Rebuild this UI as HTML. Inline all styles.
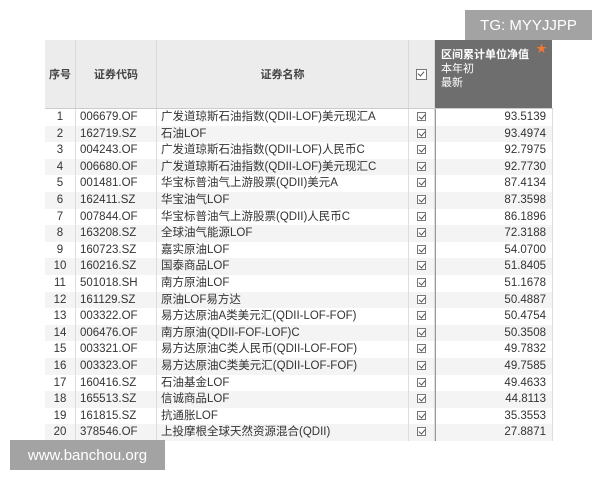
<!DOCTYPE html>
<html><head><meta charset="utf-8"><style>
body{margin:0;width:600px;height:480px;background:#fff;position:relative;overflow:hidden;font-family:"Liberation Sans","Noto Sans CJK SC",sans-serif;color:#333}
.hd{position:absolute;top:40px;height:68px;background:#ececec;font-size:11px;font-weight:bold;color:#444;display:flex;align-items:center;justify-content:center;box-sizing:border-box;border-right:1px solid #d8d8d8}
.row{position:absolute;left:45px;width:508px;height:16.6px;font-size:11.5px;line-height:16.6px}
.row div{position:absolute;top:0;height:100%;box-sizing:border-box;border-right:1px solid #ddd;white-space:nowrap;overflow:hidden}
.c1{left:0;width:31px;text-align:center}
.c2{left:31px;width:81px;padding-left:4px}
.c3{left:112px;width:252px;padding-left:4px}
.c4{left:364px;width:26px}
.c5{left:390px;width:118px;text-align:right;padding-right:6px;border-left:1px solid #999}
.cb{position:absolute;left:8px;top:3px;width:9px;height:9px;border:1px solid #777;box-sizing:border-box;background:#fff}
.cb:after{content:"";position:absolute;left:2px;top:0px;width:3px;height:5px;border:solid #555;border-width:0 1px 1px 0;transform:rotate(40deg)}
.wm{position:absolute;background:#a3a3a3;color:#fff;font-size:15px;display:flex;align-items:center;justify-content:center}
</style></head><body>
<div class="hd" style="left:45px;width:31px">序号</div>
<div class="hd" style="left:76px;width:81px">证券代码</div>
<div class="hd" style="left:157px;width:252px">证券名称</div>
<div class="hd" style="left:409px;width:26px"><span class="cb" style="position:relative;left:0;top:0;display:inline-block;width:11px;height:11px"></span></div>
<div style="position:absolute;left:435px;top:40px;width:117px;height:68px;background:#6e6e6e;color:#fff;font-size:11px;line-height:14px;padding:8px 0 0 6px;box-sizing:border-box"><b>区间累计单位净值</b><br>本年初<br>最新<span style="position:absolute;right:5px;top:2px;color:#f07830;font-size:11px">★</span></div>
<div style="position:absolute;left:45px;top:108px;width:508px;height:1px;background:#ccc"></div>
<div id="rows"></div>
<div class="wm" style="left:465px;top:10px;width:127px;height:30px">TG: MYYJJPP</div>
<div class="wm" style="left:10px;top:440px;width:155px;height:30px">www.banchou.org</div>
<script>
var d=[["006679.OF","广发道琼斯石油指数(QDII-LOF)美元现汇A","93.5139"],["162719.SZ","石油LOF","93.4974"],["004243.OF","广发道琼斯石油指数(QDII-LOF)人民币C","92.7975"],["006680.OF","广发道琼斯石油指数(QDII-LOF)美元现汇C","92.7730"],["001481.OF","华宝标普油气上游股票(QDII)美元A","87.4134"],["162411.SZ","华宝油气LOF","87.3598"],["007844.OF","华宝标普油气上游股票(QDII)人民币C","86.1896"],["163208.SZ","全球油气能源LOF","72.3188"],["160723.SZ","嘉实原油LOF","54.0700"],["160216.SZ","国泰商品LOF","51.8405"],["501018.SH","南方原油LOF","51.1678"],["161129.SZ","原油LOF易方达","50.4887"],["003322.OF","易方达原油A类美元汇(QDII-LOF-FOF)","50.4754"],["006476.OF","南方原油(QDII-FOF-LOF)C","50.3508"],["003321.OF","易方达原油C类人民币(QDII-LOF-FOF)","49.7832"],["003323.OF","易方达原油C类美元汇(QDII-LOF-FOF)","49.7585"],["160416.SZ","石油基金LOF","49.4633"],["165513.SZ","信诚商品LOF","44.8113"],["161815.SZ","抗通胀LOF","35.3553"],["378546.OF","上投摩根全球天然资源混合(QDII)","27.8871"]];
var h="";for(var i=0;i<d.length;i++){h+='<div class="row" style="top:'+(109+i*16.6)+'px;background:'+(i%2?'#f4f4f4':'#fff')+'"><div class="c1">'+(i+1)+'</div><div class="c2">'+d[i][0]+'</div><div class="c3">'+d[i][1]+'</div><div class="c4"><span class="cb"></span></div><div class="c5">'+d[i][2]+'</div></div>';}
document.getElementById("rows").innerHTML=h;
</script>
</body></html>
